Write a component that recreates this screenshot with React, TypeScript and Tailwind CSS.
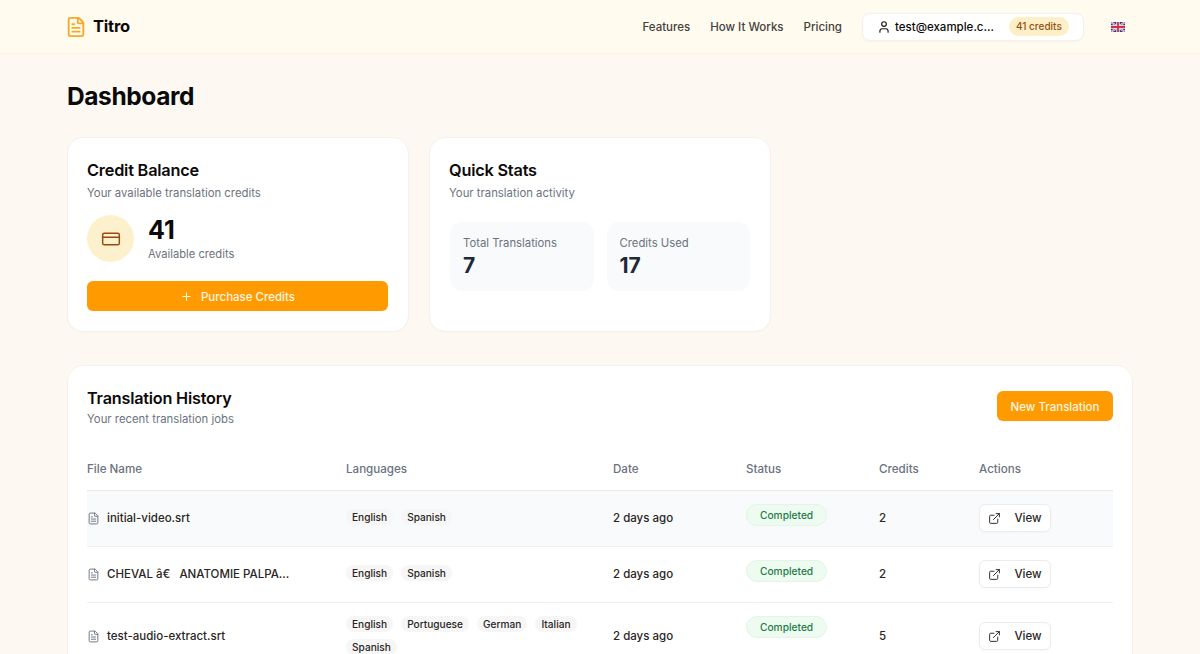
import { CreditCard, ExternalLink, FileText, Plus, User } from "lucide-react";

const rows = [
  { name: "initial-video.srt", langs: ["English", "Spanish"], credits: 2, hover: true },
  { name: "CHEVAL â€   ANATOMIE PALPA...", langs: ["English", "Spanish"], credits: 2 },
  {
    name: "test-audio-extract.srt",
    langs: ["English", "Portuguese", "German", "Italian", "Spanish"],
    credits: 5,
  },
];

function UkFlag() {
  return (
    <svg width="14" height="10" viewBox="0 0 14 10" className="rounded-[1px]">
      <rect width="14" height="10" fill="#2b3f86" />
      <path d="M0 0L14 10M14 0L0 10" stroke="#f4eef0" strokeWidth="2" />
      <path d="M0 0L14 10M14 0L0 10" stroke="#c8324a" strokeWidth="0.7" />
      <path d="M7 0V10M0 5H14" stroke="#f4eef0" strokeWidth="3.4" />
      <path d="M7 0V10M0 5H14" stroke="#c8324a" strokeWidth="1.8" />
    </svg>
  );
}

export default function App() {
  return (
    <div className="h-screen overflow-hidden bg-[#fdf8f2] font-['Inter',sans-serif] text-[#0c0a09]">
      <header className="h-[54px] border-b border-[#fdf5e4] bg-[#fffbef]">
        <div className="flex h-[53px] items-center pl-[65px] pr-[75px]">
          <FileText className="h-[22px] w-[22px] text-[#f9a825]" strokeWidth={2} />
          <span className="ml-[6px] text-[16.5px] font-bold tracking-[-0.2px]">Titro</span>
          <nav className="ml-auto flex items-center gap-5 pt-[2px] text-[11.5px] font-medium text-[#44403c]">
            <span>Features</span>
            <span>How It Works</span>
            <span>Pricing</span>
          </nav>
          <div className="ml-5 flex h-[28px] w-[222px] items-center rounded-lg border border-[#f3f1ee] bg-white pl-[14px] shadow-[0_1px_2px_rgba(0,0,0,0.03)]">
            <User className="h-[14px] w-[14px] text-[#1c1917]" strokeWidth={2} />
            <span className="ml-[4px] pt-[2px] text-[11.5px] font-medium">test@example.c...</span>
            <span className="ml-[15px] whitespace-nowrap rounded-full bg-[#fdefc8] px-[7px] py-[2px] text-[10px] leading-[15px] font-medium text-[#97500f]">
              41 credits
            </span>
          </div>
          <div className="ml-[27px] flex items-center">
            <UkFlag />
          </div>
        </div>
      </header>

      <main className="px-[67px] pt-[24px]">
        <h1 className="text-[24.5px] leading-[36px] font-bold tracking-[-0.4px] text-[#0a0a0a]">Dashboard</h1>

        <div className="mt-[23px] grid grid-cols-3 gap-5">
          <section className="h-[195px] rounded-2xl border border-[#f5f2ee] bg-white px-[19px] pt-[21px] shadow-[0_1px_2px_rgba(0,0,0,0.02)]">
            <h2 className="text-[16.3px] leading-[22px] font-semibold tracking-[-0.2px]">Credit Balance</h2>
            <p className="mt-[3px] text-[11.35px] leading-[18px] text-[#6b7280]">Your available translation credits</p>
            <div className="mt-[13px] flex items-center gap-[14px]">
              <div className="flex h-[47px] w-[47px] items-center justify-center rounded-full bg-[#fdf1cd]">
                <CreditCard className="h-[20px] w-[20px] text-[#964a10]" strokeWidth={1.75} />
              </div>
              <div>
                <div className="text-[25px] leading-[31px] font-bold">41</div>
                <div className="text-[11.2px] leading-[16px] text-[#6b7280]">Available credits</div>
              </div>
            </div>
            <button className="mt-[19px] mr-[1px] flex h-[30px] w-[301px] items-center justify-center gap-2 rounded-md bg-[#ff9b00] text-[11.5px] font-medium text-[#fff6e3] shadow-[0_1px_2px_rgba(0,0,0,0.03)]">
              <Plus className="h-[13px] w-[13px]" strokeWidth={2} />
              <span className="pt-[3px]">Purchase Credits</span>
            </button>
          </section>

          <section className="h-[195px] rounded-2xl border border-[#f5f2ee] bg-white px-[19px] pt-[21px] shadow-[0_1px_2px_rgba(0,0,0,0.02)]">
            <h2 className="text-[16.3px] leading-[22px] font-semibold tracking-[-0.2px]">Quick Stats</h2>
            <p className="mt-[3px] text-[11.35px] leading-[18px] text-[#6b7280]">Your translation activity</p>
            <div className="mx-[1px] mt-[20px] grid grid-cols-2 gap-[13px]">
              <div className="h-[69px] rounded-xl bg-[#f9fafb] px-[13px] pt-[13px]">
                <div className="text-[11.3px] leading-[16px] text-[#6b7280]">Total Translations</div>
                <div className="mt-[1px] text-[21px] leading-[28px] font-bold text-[#1f2937]">7</div>
              </div>
              <div className="h-[69px] rounded-xl bg-[#f9fafb] px-[13px] pt-[13px]">
                <div className="text-[11.3px] leading-[16px] text-[#6b7280]">Credits Used</div>
                <div className="mt-[1px] text-[21px] leading-[28px] font-bold text-[#1f2937]">17</div>
              </div>
            </div>
          </section>
        </div>

        <section className="mt-[33px] rounded-2xl border border-[#f5f2ee] bg-white px-[19px] pt-[21px] pb-5 shadow-[0_1px_2px_rgba(0,0,0,0.02)]">
          <div className="flex items-start justify-between">
            <div>
              <h2 className="text-[16.2px] leading-[22px] font-semibold tracking-[-0.2px]">Translation History</h2>
              <p className="mt-[1px] text-[11.35px] leading-[18px] text-[#6b7280]">Your recent translation jobs</p>
            </div>
            <button className="mt-[4px] h-[30px] w-[116px] rounded-md bg-[#ff9b00] pt-[3px] text-[11.5px] font-medium text-[#fff6e3] shadow-[0_1px_2px_rgba(0,0,0,0.03)]">
              New Translation
            </button>
          </div>

          <table className="mt-[18px] w-full table-fixed border-collapse text-left">
            <thead>
              <tr className="h-[44px] border-b border-[#e9e9ea] text-[11.6px] text-[#6b7280]">
                <th className="w-[259px] pt-[3px] font-medium">File Name</th>
                <th className="w-[267px] pt-[3px] font-medium">Languages</th>
                <th className="w-[133px] pt-[3px] font-medium">Date</th>
                <th className="w-[133px] pt-[3px] font-medium">Status</th>
                <th className="w-[100px] pt-[3px] font-medium">Credits</th>
                <th className="pt-[3px] font-medium">Actions</th>
              </tr>
            </thead>
            <tbody>
              {rows.map((row) => (
                <tr
                  key={row.name}
                  className={`border-b border-[#efefef] text-[11.5px] text-[#292524] ${row.hover ? "bg-[#f9fafb]" : ""}`}
                >
                  <td className="h-[56px]">
                    <div className="flex items-center gap-[7px] font-medium">
                      <FileText className="h-[13px] w-[13px] text-[#6b7280]" strokeWidth={1.75} />
                      <span className="whitespace-pre pt-[2px]">{row.name}</span>
                    </div>
                  </td>
                  <td className="pt-[13px] pb-[15px]">
                    <div className="flex flex-wrap gap-x-[8px] gap-y-[7px]">
                      {row.langs.map((lang) => (
                        <span
                          key={lang}
                          className="rounded-full bg-[#f6f6f6] px-[6px] text-[10.15px] leading-[16px] font-medium text-[#292524]"
                        >
                          {lang}
                        </span>
                      ))}
                    </div>
                  </td>
                  <td className="pt-[2px] font-medium">2 days ago</td>
                  <td className="pt-[13px] align-top">
                    <span className="inline-block rounded-full border border-[#e2f5e6] bg-[#eefbf1] px-[13px] py-[2px] text-[10.2px] leading-[16px] font-medium text-[#1c7c45]">
                      Completed
                    </span>
                  </td>
                  <td className="pt-[2px] font-medium">{row.credits}</td>
                  <td>
                    <button className="flex h-[28px] w-[72px] items-center justify-center gap-[13px] rounded-md border border-[#ececec] bg-white text-[11.5px] font-medium shadow-[0_1px_2px_rgba(0,0,0,0.03)]">
                      <ExternalLink className="h-[13px] w-[13px]" strokeWidth={1.75} />
                      <span className="pt-[2px]">View</span>
                    </button>
                  </td>
                </tr>
              ))}
            </tbody>
          </table>
        </section>
      </main>
    </div>
  );
}
